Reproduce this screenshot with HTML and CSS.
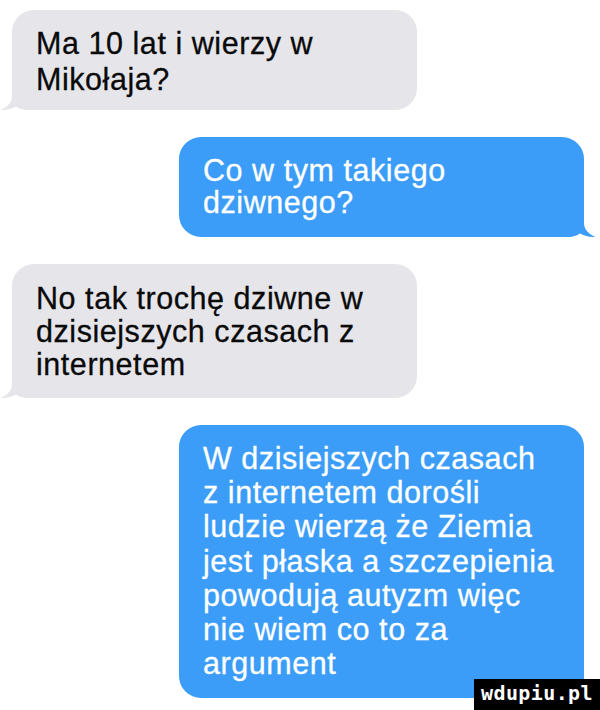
FILE: index.html
```html
<!DOCTYPE html>
<html lang="pl">
<head>
    <meta charset="UTF-8">
    <title>Wiadomości</title>
    <link rel="stylesheet" href="styles.css">
</head>
<body>

    <div class="chat">
        <div class="bubble received first">
            Ma 10 lat i wierzy w<br>Mikołaja?
            <svg class="tail" width="30" height="22" viewBox="0 0 30 22"><path d="M12,0 L12,8 C12,14 8,19 0.5,21.8 C6,22.3 11,21 16,18.5 C19,20.8 23,22 30,22 L30,0 Z"/></svg>
        </div>

        <div class="bubble sent second">
            Co w tym takiego<br>dziwnego?
            <svg class="tail" width="30" height="22" viewBox="0 0 30 22"><path d="M18,0 L18,8 C18,14 22,19 29.5,21.8 C24,22.3 19,21 14,18.5 C11,20.8 7,22 0,22 L0,0 Z"/></svg>
        </div>

        <div class="bubble received third">
            No tak trochę dziwne w<br>dzisiejszych czasach z<br>internetem
            <svg class="tail" width="30" height="22" viewBox="0 0 30 22"><path d="M12,0 L12,8 C12,14 8,19 0.5,21.8 C6,22.3 11,21 16,18.5 C19,20.8 23,22 30,22 L30,0 Z"/></svg>
        </div>

        <div class="bubble sent fourth">
            W dzisiejszych czasach<br>z internetem dorośli<br>ludzie wierzą że Ziemia<br>jest płaska a szczepienia<br>powodują autyzm więc<br>nie wiem co to za<br>argument
            <svg class="tail" width="30" height="22" viewBox="0 0 30 22"><path d="M18,0 L18,8 C18,14 22,19 29.5,21.8 C24,22.3 19,21 14,18.5 C11,20.8 7,22 0,22 L0,0 Z"/></svg>
        </div>
    </div>

    <div class="watermark">wdupiu.pl</div>

</body>
</html>
```

FILE: styles.css
```css
* {
    margin: 0;
    padding: 0;
    box-sizing: border-box;
}

body {
    background-color: white;
    width: 600px;
    height: 710px;
    overflow: hidden;
    position: relative;
    font-family: "Liberation Sans", Arial, sans-serif;
}

.chat {
    display: flex;
    flex-direction: column;
    gap: 27px;
    padding-top: 10px;
}

.bubble {
    position: relative;
    width: 405px;
    padding: 17px 24px;
    border-radius: 22px;
    font-size: 30.5px;
    letter-spacing: 0.55px;
    line-height: 34px;
    -webkit-text-stroke: 0.3px currentColor;
}

.received {
    background-color: #e5e5ea;
    color: #0a0a0a;
    margin-left: 12px;
    border-bottom-left-radius: 16px;
}

.received .tail {
    position: absolute;
    left: -12px;
    bottom: 0;
    fill: #e5e5ea;
}

.sent {
    background-color: #3b9df7;
    color: white;
    margin-left: 179px;
    border-bottom-right-radius: 16px;
}

.sent .tail {
    position: absolute;
    right: -12px;
    bottom: 0;
    fill: #3b9df7;
}

.first {
    padding-top: 14.5px;
    padding-bottom: 12.5px;
    line-height: 36.5px;
}

.second {
    padding-top: 18px;
    padding-bottom: 19px;
    line-height: 31.5px;
}

.third {
    padding-top: 18px;
    padding-bottom: 17px;
    line-height: 33px;
}

.fourth {
    padding-top: 16px;
    padding-bottom: 17.5px;
    line-height: 34.2px;
}

/* znak wodny w rogu */
.watermark {
    position: absolute;
    right: 0;
    bottom: 0;
    width: 126px;
    height: 31px;
    background-color: black;
    color: white;
    font-family: "DejaVu Sans Mono", monospace;
    font-weight: bold;
    font-size: 20px;
    letter-spacing: 0.4px;
    line-height: 29px;
    text-align: center;
}
```
